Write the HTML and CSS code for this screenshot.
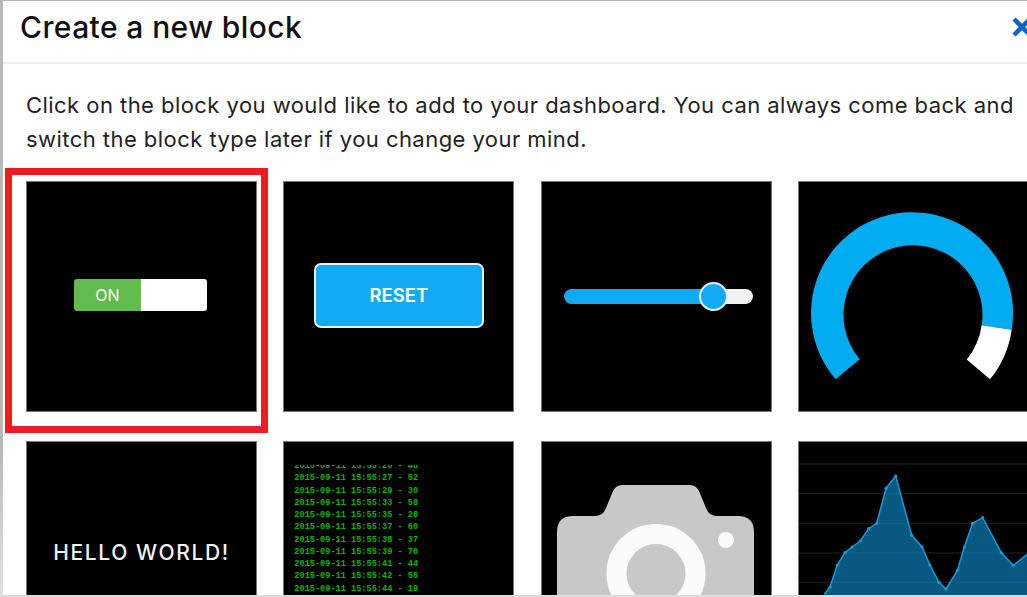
FILE: index.html
```html
<!DOCTYPE html>
<html lang="en">
<head>
    <meta charset="UTF-8">
    <meta name="viewport" content="width=device-width, initial-scale=1.0">
    <title>Create a new block</title>
    <link rel="stylesheet" href="styles.css">
</head>
<body>
    <div class="modal">
        <header class="modal-header">
            <h1 class="modal-title">Create a new block</h1>
            <svg class="modal-close" viewBox="0 0 20 20" aria-label="Close">
                <path d="M2 2 L18 18 M18 2 L2 18"/>
            </svg>
        </header>
        <div class="modal-body">
            <p class="modal-intro">Click on the block you would like to add to your dashboard. You can always come back and switch the block type later if you change your mind.</p>
            <div class="block-grid">
                <div class="block block-selected">
                    <div class="toggle">
                        <div class="toggle-on">ON</div>
                        <div class="toggle-off"></div>
                    </div>
                    <div class="selected-frame"></div>
                </div>
                <div class="block">
                    <div class="reset-button">RESET</div>
                </div>
                <div class="block">
                    <div class="slider">
                        <div class="slider-thumb"></div>
                    </div>
                </div>
                <div class="block">
                    <svg class="block-art" viewBox="0 0 231 231">
                        <path fill="#02acf1" d="M37.7 198.3 A101 101 0 1 1 213.7 148.7 L183.7 144.3 A69.5 69.5 0 1 0 61.7 178.3 Z"/>
                        <path fill="#fff" d="M213.7 148.7 A101 101 0 0 1 192 198.3 L168.7 178.6 A69.5 69.5 0 0 0 183.7 144.3 Z"/>
                    </svg>
                </div>
                <div class="block block-hello">HELLO WORLD!</div>
                <div class="block block-log">
                    <div class="log-lines">
                        <div class="log-first">2015-09-11 15:55:26 - 48</div>
                        <div>2015-09-11 15:55:27 - 52</div>
                        <div>2015-09-11 15:55:29 - 30</div>
                        <div>2015-09-11 15:55:33 - 58</div>
                        <div>2015-09-11 15:55:35 - 28</div>
                        <div>2015-09-11 15:55:37 - 60</div>
                        <div>2015-09-11 15:55:38 - 37</div>
                        <div>2015-09-11 15:55:39 - 70</div>
                        <div>2015-09-11 15:55:41 - 44</div>
                        <div>2015-09-11 15:55:42 - 55</div>
                        <div>2015-09-11 15:55:44 - 19</div>
                    </div>
                </div>
                <div class="block">
                    <svg class="block-art" viewBox="0 0 231 231">
                        <path fill="#c8c8c8" d="M32 75 H54 Q62 75 65 67 L72 50 Q75 44 81 44 H149 Q155 44 158 50 L165 67 Q168 75 176 75 H197 Q213 75 213 91 V231 H16 V91 Q16 75 32 75 Z"/>
                        <circle cx="115" cy="132.5" r="39.5" fill="none" stroke="#fafafa" stroke-width="20"/>
                        <circle cx="185" cy="99" r="8" fill="#fafafa"/>
                    </svg>
                </div>
                <div class="block">
                    <svg class="block-art" viewBox="0 0 231 231">
                        <path stroke="#222" stroke-width="1" d="M0 23 H231 M0 52.7 H231 M0 82.3 H231 M0 112 H231 M0 141.3 H231"/>
                        <polygon fill="#0a7fb8" fill-opacity="0.7" points="26.3,153.3 32,146 39.3,124 47,111.7 54,106 62.3,100 70.7,87.7 78.7,82.3 88,47.3 97.7,35 113.7,94.3 124,106 132,124 141,141.3 148,148 159.3,129.7 166.3,106 174.7,82.3 184.7,76.7 203.3,111.7 215.3,124.3 231,112 231,231 26.3,231"/>
                        <polyline fill="none" stroke="#1b9ad6" stroke-width="1.5" points="26.3,153.3 32,146 39.3,124 47,111.7 54,106 62.3,100 70.7,87.7 78.7,82.3 88,47.3 97.7,35 113.7,94.3 124,106 132,124 141,141.3 148,148 159.3,129.7 166.3,106 174.7,82.3 184.7,76.7 203.3,111.7 215.3,124.3 231,112"/>
                        <g fill="#1b9ad6">
                            <circle cx="32" cy="146" r="1.6"/><circle cx="39.3" cy="124" r="1.6"/><circle cx="47" cy="111.7" r="1.6"/>
                            <circle cx="54" cy="106" r="1.6"/><circle cx="62.3" cy="100" r="1.6"/><circle cx="70.7" cy="87.7" r="1.6"/>
                            <circle cx="78.7" cy="82.3" r="1.6"/><circle cx="88" cy="47.3" r="1.6"/><circle cx="97.7" cy="35" r="1.6"/>
                            <circle cx="113.7" cy="94.3" r="1.6"/><circle cx="124" cy="106" r="1.6"/><circle cx="132" cy="124" r="1.6"/>
                            <circle cx="141" cy="141.3" r="1.6"/><circle cx="148" cy="148" r="1.6"/><circle cx="159.3" cy="129.7" r="1.6"/>
                            <circle cx="166.3" cy="106" r="1.6"/><circle cx="174.7" cy="82.3" r="1.6"/><circle cx="184.7" cy="76.7" r="1.6"/>
                            <circle cx="203.3" cy="111.7" r="1.6"/><circle cx="215.3" cy="124.3" r="1.6"/>
                        </g>
                    </svg>
                </div>
            </div>
        </div>
    </div>
</body>
</html>
```

FILE: styles.css
```css
* {
    margin: 0;
    padding: 0;
    box-sizing: border-box;
}

html, body {
    width: 1027px;
    height: 597px;
    overflow: hidden;
}

/* the grey page behind the modal, it fades out towards the bottom */
body {
    background: linear-gradient(180deg, #b8bab8 75%, #e2e2e2 100%);
}

.modal {
    width: 1024px;
    height: 597px;
    margin-left: 3px;
    overflow: hidden;
    display: flex;
    flex-direction: column;
    background: #fff;
    border-top: 1px solid #b4b4b4;
    border-bottom: 2px solid #dcdcdc;
    font-family: "Inter", "Open Sans", sans-serif;
    color: #1c1c1c;
}

.modal-header {
    flex: none;
    height: 63px;
    display: flex;
    align-items: center;
    justify-content: space-between;
    padding: 0 0 10px 17px;
    border-bottom: 2px solid #ededed;
}

.modal-title {
    font-size: 30px;
    font-weight: 500;
    letter-spacing: 0.4px;
    color: #111;
}

.modal-close {
    flex: none;
    width: 20px;
    height: 20px;
    margin-right: -5px;
    fill: none;
    stroke: #0a66c8;
    stroke-width: 4.5;
}

.modal-body {
    flex: 1;
    min-height: 0;
    padding: 25px 0 0 23px;
}

.modal-intro {
    width: 1000px;
    font-size: 22px;
    line-height: 33.5px;
    letter-spacing: 0.45px;
    color: #222;
}

.block-grid {
    display: grid;
    grid-template-columns: repeat(4, 231px);
    grid-auto-rows: 231px;
    column-gap: 26.33px;
    row-gap: 29px;
    margin-top: 25px;
}

.block {
    position: relative;
    display: flex;
    align-items: center;
    justify-content: center;
    background: #000;
    outline: 1px solid #777;
    outline-offset: -1px;
}

.block-art {
    display: block;
    width: 231px;
    height: 231px;
}

.selected-frame {
    position: absolute;
    top: -13px;
    left: -21px;
    width: 263px;
    height: 265px;
    border: 7px solid #ed1c24;
    pointer-events: none;
}

.toggle {
    display: flex;
    width: 133px;
    height: 32px;
    margin: 0 2px 3px 0;
    border-radius: 3px;
    overflow: hidden;
}

.toggle-on {
    width: 67px;
    display: flex;
    align-items: center;
    justify-content: center;
    background: #62bb4f;
    color: #f4fbf2;
    font-size: 16px;
}

.toggle-off {
    flex: 1;
    background: #fff;
}

.reset-button {
    width: 170px;
    height: 65px;
    margin-bottom: 3px;
    padding-bottom: 1px;
    display: flex;
    align-items: center;
    justify-content: center;
    background: #12aaf4;
    border: 2px solid #e6eef2;
    border-radius: 7px;
    color: #fff;
    font-size: 18.5px;
    font-weight: 600;
}

.slider {
    position: relative;
    width: 189px;
    height: 15px;
    margin-left: 4px;
    border-radius: 8px;
    background: linear-gradient(90deg, #12aaf4 78%, #f2f2f2 78%);
}

.slider-thumb {
    position: absolute;
    top: -7px;
    left: 135px;
    width: 29px;
    height: 29px;
    border-radius: 50%;
    background: #12aaf4;
    border: 2px solid #e6eef2;
}

.block-hello {
    padding-bottom: 9px;
    color: #f2f2f2;
    font-size: 21px;
    font-weight: 500;
    letter-spacing: 1.6px;
}

.block-log {
    display: block;
    padding: 24px 0 0 11px;
}

.log-lines {
    height: 200px;
    overflow: hidden;
    font-family: "Liberation Mono", monospace;
    font-size: 8.6px;
    font-weight: 700;
    line-height: 12.27px;
    color: #00b800;
}

.log-first {
    margin-top: -5px;
}
```
